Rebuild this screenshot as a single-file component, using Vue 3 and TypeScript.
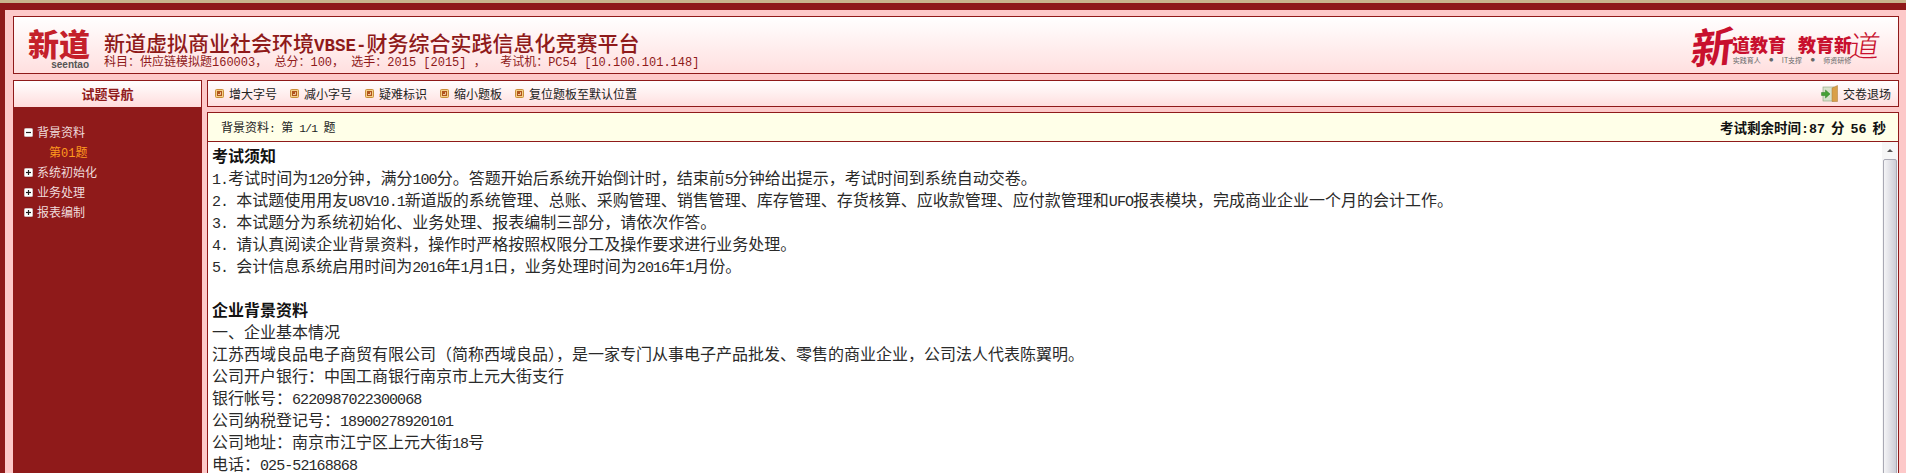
<script setup lang="ts">
// ascii runs use a half-width mono, like SimSun digits
function runs(text: string) {
  return text.split(/([\x20-\x7e]+)/).filter(Boolean).map((t) => ({
    t,
    ascii: /^[\x20-\x7e]/.test(t),
  }))
}

const tools = ['增大字号', '减小字号', '疑难标识', '缩小题板', '复位题板至默认位置']

const tree = [
  { label: '背景资料', open: true, kids: ['第01题'] },
  { label: '系统初始化', open: false, kids: [] },
  { label: '业务处理', open: false, kids: [] },
  { label: '报表编制', open: false, kids: [] },
]

const lines = [
  { text: '考试须知', bold: true },
  { text: '1.考试时间为120分钟，满分100分。答题开始后系统开始倒计时，结束前5分钟给出提示，考试时间到系统自动交卷。' },
  { text: '2. 本试题使用用友U8V10.1新道版的系统管理、总账、采购管理、销售管理、库存管理、存货核算、应收款管理、应付款管理和UFO报表模块，完成商业企业一个月的会计工作。' },
  { text: '3. 本试题分为系统初始化、业务处理、报表编制三部分，请依次作答。' },
  { text: '4. 请认真阅读企业背景资料，操作时严格按照权限分工及操作要求进行业务处理。' },
  { text: '5. 会计信息系统启用时间为2016年1月1日，业务处理时间为2016年1月份。' },
  { text: ' ' },
  { text: '企业背景资料', bold: true },
  { text: '一、企业基本情况' },
  { text: '江苏西域良品电子商贸有限公司（简称西域良品），是一家专门从事电子产品批发、零售的商业企业，公司法人代表陈翼明。' },
  { text: '公司开户银行：中国工商银行南京市上元大街支行' },
  { text: '银行帐号：6220987022300068' },
  { text: '公司纳税登记号：18900278920101' },
  { text: '公司地址：南京市江宁区上元大街18号' },
  { text: '电话：025-52168868' },
]
</script>

<template>
  <div class="strip"></div>
  <div class="page">
    <header class="banner box">
      <div class="logo">
        <span class="logo-cn">新道</span>
        <span class="logo-en">seentao</span>
      </div>
      <div class="titles">
        <h1>新道虚拟商业社会环境<span class="h-ascii">VBSE-</span>财务综合实践信息化竞赛平台</h1>
        <p>
          <span v-for="(r, i) in runs('科目：供应链模拟题160003， 总分：100， 选手：2015 [2015] ，  考试机：PC54 [10.100.101.148]')" :key="i" :class="{ a: r.ascii }">{{ r.t }}</span>
        </p>
      </div>
      <div class="slogan">
        <span class="big-char">新</span>
        <div class="slogan-mid">
          <span class="slogan-cn">道教育<i></i>教育新</span>
          <span class="slogan-sub">实践育人 <b>●</b> IT支撑 <b>●</b> 师资研修</span>
        </div>
        <span class="big-char last">道</span>
      </div>
    </header>

    <div class="columns">
      <aside class="nav">
        <div class="nav-head">试题导航</div>
        <ul class="tree">
          <li v-for="node in tree" :key="node.label">
            <div class="node">
              <svg class="toggle" width="9" height="9" viewBox="0 0 9 9">
                <rect x="0.25" y="0.25" width="8.5" height="8.5" rx="1.5" fill="#ffffff" stroke="#b8b8b8" stroke-width="0.5" />
                <path d="M2 4.5h5" stroke="#222" stroke-width="1.2" />
                <path v-if="!node.open" d="M4.5 2v5" stroke="#222" stroke-width="1.2" />
              </svg>
              <span>{{ node.label }}</span>
            </div>
            <div v-for="kid in node.kids" :key="kid" class="leaf">
              <span v-for="(r, i) in runs(kid)" :key="i" :class="{ a: r.ascii }">{{ r.t }}</span>
            </div>
          </li>
        </ul>
      </aside>

      <main class="main">
        <div class="toolbar box">
          <a v-for="tool in tools" :key="tool" class="tool">
            <svg width="9" height="9" viewBox="0 0 9 9">
              <rect x="0.5" y="0.5" width="8" height="8" rx="1" fill="#f4cf86" stroke="#c98f3a" />
              <rect x="2" y="2" width="5" height="5" fill="#b0541c" />
              <path d="M3 5.5h2.5V3.2" stroke="#ffe9c4" fill="none" stroke-width="0.8" />
            </svg>
            {{ tool }}
          </a>
          <a class="tool submit">
            <svg width="17" height="17" viewBox="0 0 17 17">
              <rect x="2" y="2" width="11" height="14" fill="#d8e2cc" stroke="#8aa37c" stroke-width="0.6" />
              <path d="M11 3 16.5 0.5V16.5H11z" fill="#d99f48" stroke="#a87a38" stroke-width="0.5" />
              <path d="M0.5 7.5h4V5l4.5 4-4.5 4v-2.5h-4z" fill="#45a135" stroke="#2f7d25" stroke-width="0.5" />
            </svg>
            交卷退场
          </a>
        </div>

        <section class="paper">
          <div class="paper-head">
            <span class="where">
              <span v-for="(r, i) in runs('背景资料: 第 1/1 题')" :key="i" :class="{ a: r.ascii }">{{ r.t }}</span>
            </span>
            <span class="clock">
              <span v-for="(r, i) in runs('考试剩余时间:87 分 56 秒')" :key="i" :class="{ a: r.ascii }">{{ r.t }}</span>
            </span>
          </div>
          <div class="paper-body">
            <div class="text">
              <div v-for="(line, n) in lines" :key="n" class="line" :class="{ bold: line.bold }">
                <span v-for="(r, i) in runs(line.text)" :key="i" :class="{ a: r.ascii }">{{ r.t }}</span>
              </div>
            </div>
            <div class="scrollbar">
              <span class="arrow"></span>
              <span class="thumb"></span>
            </div>
          </div>
        </section>
      </main>
    </div>
  </div>
</template>

<style>
html,
body {
  margin: 0;
  height: 473px;
  overflow: hidden;
  background: #fdc9c9;
}
</style>

<style scoped>
.strip {
  height: 3px;
  background: #c9b68c;
}
.page {
  box-sizing: border-box;
  height: 470px;
  overflow: hidden;
  padding: 6px 7px 0 8px;
  background: #fdc9c9;
  border-top: 7px solid #8f1a1a;
  border-left: 5px solid #8f1a1a;
  font-family: 'Noto Sans CJK SC', sans-serif;
  color: #222;
}
.a {
  font-family: 'Liberation Mono', monospace;
  font-size: 0.94em;
  letter-spacing: -0.0625em;
  line-height: 1;
}
.box {
  box-sizing: border-box;
  border: 1px solid #8f1a1a;
  background: linear-gradient(#ffffff, #ffdfdf);
}

.banner {
  height: 58px;
  display: flex;
  align-items: flex-start;
  padding: 0 0 0 14px;
}
.logo {
  display: flex;
  flex-direction: column;
  align-items: flex-end;
  width: 62px;
  flex: none;
  margin-top: 9px;
  line-height: 1;
}
.logo-cn {
  font-size: 31px;
  font-weight: 900;
  line-height: 34px;
  color: #c4202a;
}
.logo-en {
  font: 700 10px/10px 'Liberation Sans', sans-serif;
  color: #555;
  margin-right: 1px;
}
.titles {
  margin: 14px 0 0 14px;
  flex: 1;
  color: #8f1a1a;
}
.titles h1 {
  margin: 0;
  font-size: 21px;
  line-height: 22px;
  font-weight: 500;
  white-space: nowrap;
}
.h-ascii {
  font-family: 'Liberation Mono', monospace;
  font-size: 17.5px;
  font-weight: 700;
  line-height: 1;
}
.titles p {
  margin: -1px 0 0;
  font-size: 12px;
  line-height: 12px;
  white-space: pre;
}
.titles p .a {
  font-size: 12px;
  letter-spacing: 0;
}
.slogan {
  display: flex;
  align-items: flex-start;
  margin: 6px 18px 0 0;
  color: #c8102e;
}
.big-char {
  font-size: 42px;
  line-height: 44px;
  font-weight: 700;
  transform: skewX(-12deg) rotate(-6deg);
  margin-right: -2px;
}
.big-char.last {
  font-size: 30px;
  line-height: 36px;
  font-weight: 300;
  transform: skewX(-8deg);
  margin: 3px 0 0 -2px;
}
.slogan-mid {
  display: flex;
  flex-direction: column;
  align-items: center;
  margin: 11px 0 0 0;
}
.slogan-cn {
  display: flex;
  font-size: 18px;
  font-weight: 900;
  line-height: 21px;
}
.slogan-cn i {
  width: 12px;
}
.slogan-sub {
  font-size: 7px;
  line-height: 10px;
  color: #666;
  white-space: pre;
}
.slogan-sub b {
  font-size: 4px;
  margin: 0 7px;
  font-weight: 400;
  vertical-align: 1px;
}

.columns {
  display: flex;
  gap: 5px;
  margin-top: 6px;
}
.nav {
  box-sizing: border-box;
  width: 189px;
  height: 400px;
  flex: none;
  background: #8f1a1a;
  border: 1px solid #8f1a1a;
}
.nav-head {
  height: 26px;
  background: linear-gradient(#ffffff, #ffdcdc);
  color: #8f1a1a;
  font-size: 13px;
  font-weight: 700;
  line-height: 26px;
  text-align: center;
}
.tree {
  list-style: none;
  margin: 15px 0 0;
  padding: 0 0 0 10px;
  color: #f0dcdc;
  font-size: 12px;
  line-height: 20px;
}
.node {
  display: flex;
  align-items: center;
  gap: 4px;
}
.leaf {
  padding-left: 25px;
  color: #ff9a1e;
}
.leaf .a {
  font-size: 12px;
  letter-spacing: 0;
}
.main {
  flex: 1;
  min-width: 0;
}
.toolbar {
  height: 27px;
  display: flex;
  align-items: center;
  padding-left: 7px;
  font-size: 12px;
  gap: 13px;
  color: #222;
}
.tool {
  display: flex;
  align-items: center;
  gap: 5px;
}
.submit {
  margin-left: auto;
  margin-right: 7px;
}
.paper {
  margin-top: 5px;
  box-sizing: border-box;
  border: 1px solid #8f1a1a;
  height: 400px;
}
.paper-head {
  height: 28px;
  background: #ffffe8;
  border-bottom: 1px solid #8f1a1a;
  display: flex;
  align-items: center;
  justify-content: space-between;
  padding: 0 12px 0 13px;
  font-size: 12px;
  white-space: pre;
}
.clock {
  font-size: 13.5px;
  font-weight: 700;
  color: #111;
}
.clock .a {
  font-size: 13.33px;
  letter-spacing: 0;
  word-spacing: -2px;
}
.paper-body {
  display: flex;
  background: #fff;
  height: 340px;
}
.text {
  flex: 1;
  padding: 2px 0 0 4px;
  font-size: 16px;
  color: #2a2a2a;
}
.line {
  height: 22px;
  line-height: 22px;
  white-space: pre;
}
.bold {
  font-weight: 700;
  color: #111;
}
.scrollbar {
  width: 16px;
  background: #f6f6f6;
  display: flex;
  flex-direction: column;
  align-items: center;
}
.arrow {
  margin-top: 7px;
  border: 3px solid transparent;
  border-bottom: 3px solid #555;
  border-top: 0;
}
.thumb {
  box-sizing: border-box;
  margin-top: 7px;
  width: 14px;
  height: 320px;
  border: 1px solid #a9a9b4;
  border-radius: 2px;
  background: linear-gradient(90deg, #f4f4f6, #cdcdd6);
}
</style>
